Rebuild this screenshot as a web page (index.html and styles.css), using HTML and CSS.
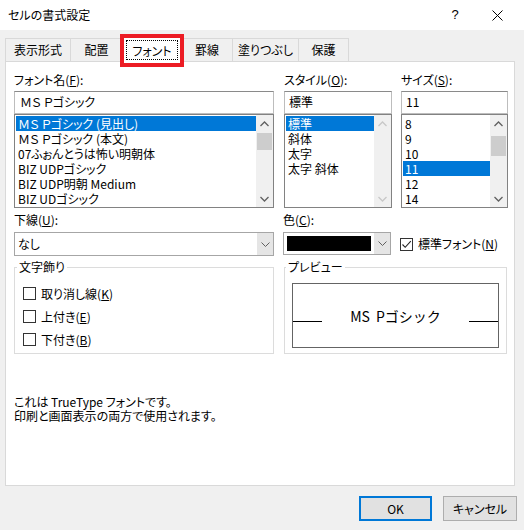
FILE: index.html
```html
<!DOCTYPE html>
<html lang="ja">
<head>
<meta charset="utf-8">
<title>セルの書式設定</title>
<link rel="stylesheet" href="styles.css">
</head>
<body>
<div class="titlebar">
  <span class="title">セルの書式設定</span>
  <span class="tbtn">?</span>
  <span class="tbtn close"><svg width="11" height="11" viewBox="0 0 11 11"><path d="M0.5 0.5L10.5 10.5M10.5 0.5L0.5 10.5" stroke="#000" stroke-width="1"/></svg></span>
</div>

<div class="tabs">
  <div class="tab t1">表示形式</div>
  <div class="tab t2">配置</div>
  <div class="tab t3 active"><span class="focus">フォント</span></div>
  <div class="tab t4">罫線</div>
  <div class="tab t5">塗りつぶし</div>
  <div class="tab t6 last">保護</div>
</div>
<div class="annot"></div>

<div class="panel">
  <div class="toprow">
    <div class="col col-font">
      <div class="label">フォント名(<u>F</u>):</div>
      <div class="input">ＭＳ Ｐゴシック</div>
      <div class="listbox">
        <div class="items">
          <div class="row sel">ＭＳ Ｐゴシック (見出し)</div>
          <div class="row">ＭＳ Ｐゴシック (本文)</div>
          <div class="row">07ふぉんとうは怖い明朝体</div>
          <div class="row">BIZ UDPゴシック</div>
          <div class="row">BIZ UDP明朝 Medium</div>
          <div class="row">BIZ UDゴシック</div>
        </div>
        <div class="scroll">
          <div class="arrow"><svg width="9" height="6" viewBox="0 0 9 6"><path d="M0.5 5L4.5 1L8.5 5" fill="none" stroke="#606060" stroke-width="1.3"/></svg></div>
          <div class="thumb thumb-font"></div>
          <div class="track"></div>
          <div class="arrow"><svg width="9" height="6" viewBox="0 0 9 6"><path d="M0.5 1L4.5 5L8.5 1" fill="none" stroke="#606060" stroke-width="1.3"/></svg></div>
        </div>
      </div>
    </div>
    <div class="col col-style">
      <div class="label">スタイル(<u>O</u>):</div>
      <div class="input">標準</div>
      <div class="listbox">
        <div class="items">
          <div class="row sel">標準</div>
          <div class="row">斜体</div>
          <div class="row">太字</div>
          <div class="row">太字 斜体</div>
        </div>
        <div class="scroll">
          <div class="arrow"><svg width="9" height="6" viewBox="0 0 9 6"><path d="M0.5 5L4.5 1L8.5 5" fill="none" stroke="#c8c8c8" stroke-width="1.3"/></svg></div>
          <div class="track"></div>
          <div class="arrow"><svg width="9" height="6" viewBox="0 0 9 6"><path d="M0.5 1L4.5 5L8.5 1" fill="none" stroke="#c8c8c8" stroke-width="1.3"/></svg></div>
        </div>
      </div>
    </div>
    <div class="col col-size">
      <div class="label">サイズ(<u>S</u>):</div>
      <div class="input">11</div>
      <div class="listbox">
        <div class="items">
          <div class="row">8</div>
          <div class="row">9</div>
          <div class="row">10</div>
          <div class="row sel">11</div>
          <div class="row">12</div>
          <div class="row">14</div>
        </div>
        <div class="scroll">
          <div class="arrow"><svg width="9" height="6" viewBox="0 0 9 6"><path d="M0.5 5L4.5 1L8.5 5" fill="none" stroke="#606060" stroke-width="1.3"/></svg></div>
          <div class="thumb thumb-size"></div>
          <div class="track"></div>
          <div class="arrow"><svg width="9" height="6" viewBox="0 0 9 6"><path d="M0.5 1L4.5 5L8.5 1" fill="none" stroke="#606060" stroke-width="1.3"/></svg></div>
        </div>
      </div>
    </div>
  </div>

  <div class="midrow">
    <div class="col col-font">
      <div class="label">下線(<u>U</u>):</div>
      <div class="select sel-under">
        <span class="sel-text">なし</span>
        <span class="dd"><svg width="9" height="5" viewBox="0 0 9 5"><path d="M0.5 0.5L4.5 4.5L8.5 0.5" fill="none" stroke="#606060" stroke-width="1"/></svg></span>
      </div>
    </div>
    <div class="col col-color">
      <div class="label">色(<u>C</u>):</div>
      <div class="select sel-color">
        <span class="swatch"></span>
        <span class="dd"><svg width="9" height="5" viewBox="0 0 9 5"><path d="M0.5 0.5L4.5 4.5L8.5 0.5" fill="none" stroke="#606060" stroke-width="1"/></svg></span>
      </div>
    </div>
    <div class="col col-std">
      <div class="check-line">
        <span class="cb"><svg width="11" height="11" viewBox="0 0 11 11"><path d="M1.5 5.5L4.2 8.3L9.8 2.2" fill="none" stroke="#222" stroke-width="1.1"/></svg></span>
        <span>標準フォント(<u>N</u>)</span>
      </div>
    </div>
  </div>

  <div class="groups">
    <fieldset class="group g-deco">
      <legend>文字飾り</legend>
      <div class="check-row"><span class="cb"></span><span>取り消し線(<u>K</u>)</span></div>
      <div class="check-row"><span class="cb"></span><span>上付き(<u>E</u>)</span></div>
      <div class="check-row"><span class="cb"></span><span>下付き(<u>B</u>)</span></div>
    </fieldset>
    <fieldset class="group g-prev">
      <legend>プレビュー</legend>
      <div class="preview">
        <span class="bline"></span>
        <span class="ptext">MS Pゴシック</span>
        <span class="bline"></span>
      </div>
    </fieldset>
  </div>

  <div class="info">
    <div>これは TrueType フォントです。</div>
    <div>印刷と画面表示の両方で使用されます。</div>
  </div>
</div>

<div class="buttons">
  <div class="btn ok">OK</div>
  <div class="btn">キャンセル</div>
</div>
</body>
</html>
```

FILE: styles.css
```css
* { box-sizing: border-box; }
html, body { margin: 0; padding: 0; }
body {
  width: 524px;
  height: 530px;
  background: #f0f0f0;
  font-family: "Noto Sans CJK JP", "Noto Sans", sans-serif;
  font-size: 12px;
  line-height: 16px;
  color: #000;
  font-feature-settings: "palt";
  position: relative;
  overflow: hidden;
}
u { text-decoration: underline; text-underline-offset: 1px; }

/* title bar */
.titlebar {
  height: 30px;
  background: #fff;
  display: flex;
  align-items: center;
  padding-left: 8px;
  padding-right: 6px;
}
.title { flex: 1; font-size: 12px; }
.tbtn {
  width: 42px;
  height: 30px;
  display: flex;
  align-items: center;
  justify-content: center;
  font-family: "Liberation Sans", sans-serif;
  font-size: 13px;
}

/* tabs */
.tabs {
  display: flex;
  align-items: flex-start;
  height: 23px;
  margin-top: 8px;
  padding-left: 5px;
}
.tab {
  height: 23px;
  border-top: 1px solid #d9d9d9;
  border-left: 1px solid #d9d9d9;
  text-align: center;
  line-height: 22px;
  background: #f0f0f0;
}
.tab.last { border-right: 1px solid #d9d9d9; }
.t1 { width: 65px; }
.t2 { width: 52px; }
.t3 { width: 60px; }
.t4 { width: 50px; }
.t5 { width: 66px; }
.t6 { width: 51px; }
.tab.active {
  position: relative;
  z-index: 2;
  height: 26px;
  margin-top: -2px;
  background: #fff;
  border-right: 1px solid #d9d9d9;
  padding-top: 3px;
}
.tab.active + .tab { border-left: none; }
.focus {
  display: block;
  margin: 0 3px;
  height: 20px;
  line-height: 19px;
  border: 1px dotted #000;
}
.annot {
  position: absolute;
  left: 120px;
  top: 34px;
  width: 64px;
  height: 33px;
  border: 4px solid #ec1c24;
  z-index: 3;
}

/* panel */
.panel {
  margin-left: 5px;
  width: 510px;
  height: 425px;
  background: #fff;
  border: 1px solid #d9d9d9;
  padding: 10px 0 0 8px;
}
.toprow, .midrow { display: flex; }
.col-font { width: 260px; }
.col-style { width: 108px; margin-left: 10px; }
.col-size { width: 107px; margin-left: 9px; }
.col-color { width: 108px; margin-left: 9px; }
.col-std { margin-left: 9px; padding-top: 20px; }
.label { height: 16px; line-height: 16px; }
.input {
  margin-top: 3px;
  height: 23px;
  border: 1px solid #7a7a7a;
  border-color: #8a8a8a #bdbdbd #bdbdbd #bdbdbd;
  padding-left: 4px;
  line-height: 20px;
}
.col-font .input { padding-left: 5px; }
.listbox {
  height: 94px;
  border: 1px solid #828282;
  display: flex;
}
.items {
  flex: 1;
  padding: 1px 0 0 1px;
  overflow: hidden;
}
.row {
  height: 15px;
  line-height: 15px;
  padding-left: 2px;
  white-space: nowrap;
}
.row.sel { background: #0078d7; color: #fff; }
.scroll {
  width: 17px;
  background: #f0f0f0;
  display: flex;
  flex-direction: column;
}
.arrow {
  height: 17px;
  display: flex;
  align-items: center;
  justify-content: center;
}
.track { flex: 1; }
.thumb { margin: 0 1px; background: #cdcdcd; }
.thumb-font { height: 17px; margin-top: 1px; }
.thumb-size { height: 20px; margin-top: 4px; }

/* middle row */
.midrow { margin-top: 4px; }
.select {
  margin-top: 4px;
  display: flex;
  align-items: stretch;
  border: 1px solid #a6a6a6;
  background: #fff;
}
.sel-under { height: 24px; }
.sel-color { height: 23px; }
.sel-text { flex: 1; padding-left: 3px; line-height: 22px; }
.swatch {
  flex: 1;
  margin: 3px;
  background: #000;
}
.dd {
  width: 16px;
  background: #e5e5e5;
  display: flex;
  align-items: center;
  justify-content: center;
}
.check-line {
  display: flex;
  align-items: center;
  height: 24px;
  gap: 5px;
}
.cb {
  width: 13px;
  height: 13px;
  border: 1px solid #333;
  background: #fff;
  display: flex;
  align-items: center;
  justify-content: center;
  flex: none;
}

/* groups */
.groups { display: flex; margin-top: 3px; }
.group {
  margin: 0;
  min-width: 0;
  height: 95px;
  border: 1px solid #dcdcdc;
}
.group legend {
  padding: 0 2px;
  line-height: 16px;
  margin-left: -6px;
}
.g-deco { width: 260px; padding: 7px 8px 0 8px; }
.g-prev { width: 223px; margin-left: 10px; padding: 8px 7px 0 7px; }
.check-row {
  display: flex;
  align-items: center;
  gap: 5px;
  height: 23px;
}
.preview {
  width: 207px;
  height: 65px;
  border: 1px solid #646464;
  display: flex;
  align-items: flex-start;
}
.bline {
  width: 29px;
  height: 1px;
  background: #000;
  margin-top: 37px;
  flex: none;
}
.ptext {
  flex: 1;
  text-align: center;
  font-size: 14px;
  line-height: 16px;
  margin-top: 24px;
  font-feature-settings: normal;
  word-spacing: 3px;
}

/* info */
.info {
  margin-top: 41px;
  line-height: 14px;
}

/* buttons */
.buttons {
  display: flex;
  justify-content: flex-end;
  gap: 11px;
  margin-top: 10px;
  padding-right: 7px;
}
.btn {
  width: 74px;
  height: 25px;
  border: 1px solid #adadad;
  background: #e1e1e1;
  text-align: center;
  line-height: 23px;
}
.btn.ok {
  width: 73px;
  border: 2px solid #0078d7;
  line-height: 21px;
}
```
